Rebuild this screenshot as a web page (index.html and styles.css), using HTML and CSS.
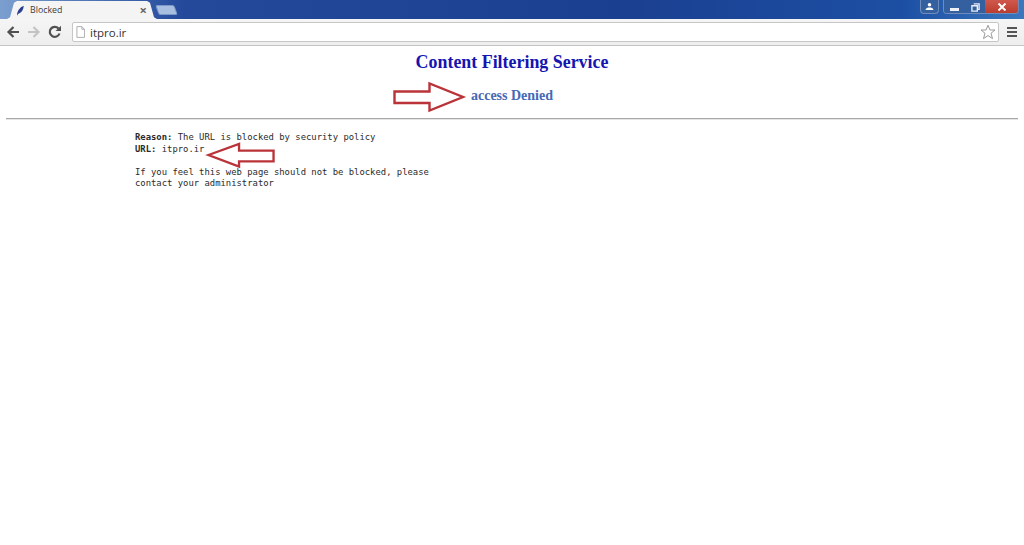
FILE: index.html
```html
<!DOCTYPE html>
<html lang="en">
<head>
<meta charset="utf-8">
<title>Blocked</title>
<link rel="stylesheet" href="styles.css">
</head>
<body>
<header class="chrome">
  <div class="titlebar">
    <div class="tab">
      <svg class="favicon" viewBox="0 0 10 12"><path d="M1 11C1.500 7 4 2.500 8.500 .8 8.500 5 6 9 2 9.800L1.500 11.500Z" fill="#2a3f8f"/></svg>
      <span class="tab-title">Blocked</span>
      <span class="tab-close">×</span>
    </div>
    <div class="newtab"></div>
    <div class="winbtns">
      <div class="winbtn user">
        <svg viewBox="0 0 12 10" class="usericon"><circle cx="6" cy="3" r="2" fill="#fff"/><path d="M1.500 9C2 6.500 4 6 6 6s4 .5 4.500 3Z" fill="#fff"/></svg>
      </div>
      <div class="wingroup">
        <div class="winbtn min"><span class="minbar"></span></div>
        <div class="winbtn max">
          <svg viewBox="0 0 10 10" class="maxicon"><path d="M3 1H9V7H7M1 3H7V9H1Z" fill="none" stroke="#e8eef8" stroke-width="1.500"/></svg>
        </div>
        <div class="winbtn close">
          <svg viewBox="0 0 10 8" class="closeicon"><path d="M1.500 .5 8.500 7.500M8.500 .5 1.500 7.500" stroke="#fff" stroke-width="2"/></svg>
        </div>
      </div>
    </div>
  </div>
  <div class="toolbar">
    <svg class="nav" viewBox="0 0 14 14"><path d="M13 7H3M7.500 2 2.500 7 7.500 12" fill="none" stroke="#505050" stroke-width="2.200"/></svg>
    <svg class="nav" viewBox="0 0 14 14"><path d="M1 7H11M6.500 2 11.500 7 6.500 12" fill="none" stroke="#c4c4c4" stroke-width="2.200"/></svg>
    <svg class="nav" viewBox="0 0 14 14"><path d="M11.500 8.500A5 5 0 1 1 10.500 3.500" fill="none" stroke="#505050" stroke-width="2.200"/><path d="M7.500 6H13V.8Z" fill="#505050"/></svg>
    <div class="omnibox">
      <svg class="pageicon" viewBox="0 0 10 13"><path d="M1 .5H6.500L9.500 3.500V12.500H1ZM6.500 .5V3.500H9.500" fill="#fff" stroke="#a8a8a8"/></svg>
      <span class="url">itpro.ir</span>
      <svg class="star" viewBox="0 0 16 16"><path d="M8 1.200 10 6H15L11 9.300 12.500 14.600 8 11.600 3.500 14.600 5 9.300 1 6H6Z" fill="#fff" stroke="#9a9a9a"/></svg>
    </div>
    <div class="menu"><span></span><span></span><span></span></div>
  </div>
</header>
<main class="page">
  <h1 class="heading">Content Filtering Service</h1>
  <h2 class="subheading">
    <span class="sub-wrap">
      <svg class="arrow arrow-right" viewBox="0 0 72 30"><path d="M1.500 9.500H36.500V1.500L70 15 36.500 28.500V21H1.500Z" fill="#fff" stroke="#b93339" stroke-width="2.400"/></svg>
      access Denied
    </span>
  </h2>
  <hr class="rule">
  <div class="message">
    <svg class="arrow arrow-left" viewBox="0 0 70 26"><path d="M1.500 13 33 1.500V8.500H68.500V19.500H33V25Z" fill="#fff" stroke="#b93339" stroke-width="2.400"/></svg>
    <p><b>Reason:</b> The URL is blocked by security policy<br><b>URL:</b> itpro.ir</p>
    <p>If you feel this web page should not be blocked, please<br>contact your administrator</p>
  </div>
</main>
</body>
</html>
```
FILE: styles.css
```css
* { box-sizing: border-box; }
html, body { margin: 0; height: 100%; background: #fff; overflow: hidden; }
body { font-family: "Liberation Serif", serif; }

.chrome { height: 46px; display: flex; flex-direction: column; border-bottom: 1px solid #c4c4c4; }
.titlebar {
  height: 19px; display: flex; align-items: flex-end; padding-left: 7px;
  background: linear-gradient(90deg, #7b9fcf 0, #5f86bf 5%, #24499b 18%, #1b3f90 60%, #1c4fa3 88%, #3a77bd 100%);
}
.tab {
  width: 150px; height: 18px; background: #f4f4f4; display: flex; align-items: center;
  padding: 0 10px 0 9px;
  clip-path: polygon(0 100%, 3px 90%, 7px 10%, 10px 0, 140px 0, 143px 10%, 147px 90%, 150px 100%);
  font: 8.800px "Open Sans", sans-serif; color: #3c3c3c;
}
.favicon { width: 9px; height: 11px; margin-right: 5px; }
.tab-title { flex: 1; }
.tab-close { font-size: 13px; font-weight: 700; color: #666; line-height: 1; }
.newtab {
  width: 19px; height: 10px; margin: 0 0 4px 0; background: #a9bfe0; border-radius: 2px;
  transform: skewX(20deg); border: 1px solid #7c98c8;
}
.winbtns { margin-left: auto; display: flex; align-self: flex-start; margin-right: 5px; gap: 4px; }
.winbtn { display: flex; align-items: center; justify-content: center; height: 14px; }
.wingroup { display: flex; border-radius: 0 0 4px 4px; overflow: hidden; border: 1px solid #6e8cbc; border-top: 0; height: 14px; }
.user { width: 19px; background: #34609f; border: 1px solid #6e8cbc; border-top: 0; border-radius: 0 0 4px 4px; }
.usericon { width: 11px; height: 9px; }
.min { width: 21px; background: #34609f; }
.minbar { width: 9px; height: 3px; background: #eef2f8; margin-top: 5px; }
.max { width: 20px; background: #34609f; }
.maxicon { width: 9px; height: 9px; }
.close { width: 33px; background: linear-gradient(#d0584c, #b93c2c); }
.closeicon { width: 10px; height: 8px; }

.toolbar {
  flex: 1; display: flex; align-items: center; padding: 0 7px 0 6px; gap: 7px;
  background: linear-gradient(#f5f5f5, #eeeeee);
}
.nav { width: 14px; height: 14px; flex: none; }
.omnibox {
  flex: 1; height: 20px; margin-left: 3px; margin-right: 1px; background: #fff; border: 1px solid #c6c6c6; border-radius: 2px;
  display: flex; align-items: center; padding: 0 2px 0 3px;
  font: 11.500px "Open Sans", sans-serif; color: #333;
}
.pageicon { width: 9px; height: 12px; margin-right: 5px; }
.url { flex: 1; }
.star { width: 16px; height: 16px; }
.menu { width: 10px; height: 10px; display: flex; flex-direction: column; justify-content: space-between; }
.menu span { display: block; height: 2px; background: #555; }

.page { padding: 6px 6px 0; }
.heading { margin: 0; text-align: center; font-size: 17.900px; line-height: 21px; color: #1515b0; }
.subheading { margin: 15px 0 0; text-align: center; font-size: 14px; line-height: 16px; color: #4668b5; }
.sub-wrap { position: relative; }
.arrow { position: absolute; overflow: visible; }
.arrow-right { width: 72px; height: 30px; left: -78px; top: -6px; }
.rule { margin: 14px 0 0; border: 0; border-top: 1px solid #a9a9a9; border-bottom: 1px solid #e4e4e4; height: 2px; }
.message {
  position: relative; margin: 12px 0 0 129px; width: 310px;
  font: 8.900px/11.500px "DejaVu Sans Mono", monospace; color: #2b2b2b;
}
.message p { margin: 0 0 11.500px; }
.arrow-left { width: 68px; height: 26px; left: 72px; top: 10px; }
```
